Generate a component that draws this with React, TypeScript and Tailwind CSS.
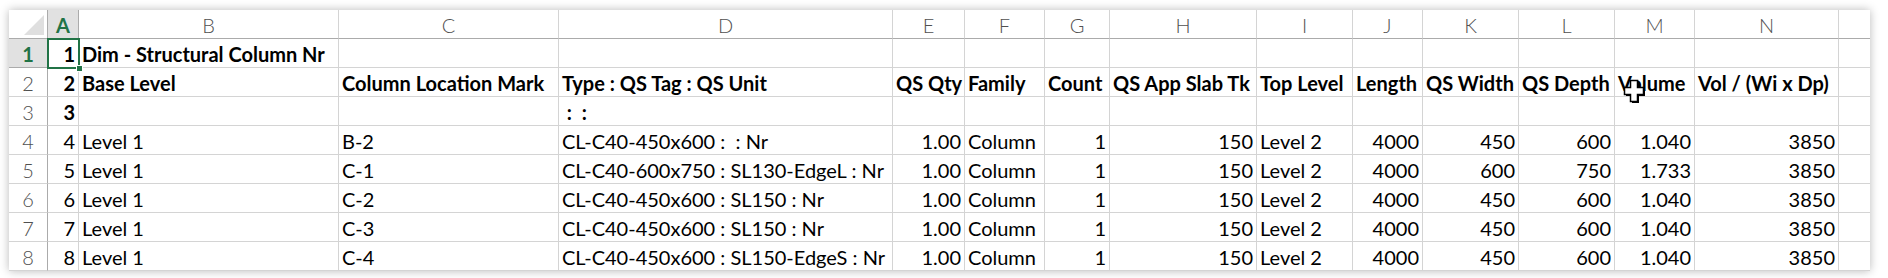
import React from "react";

type Cell = { t: string; r?: boolean };

const colLetters = ["A", "B", "C", "D", "E", "F", "G", "H", "I", "J", "K", "L", "M", "N", ""];

const L = (t: string): Cell => ({ t });
const R = (t: string): Cell => ({ t, r: true });

const headerRow: Cell[] = [
  R("2"),
  L("Base Level"),
  L("Column Location Mark"),
  L("Type : QS Tag : QS Unit"),
  L("QS Qty"),
  L("Family"),
  L("Count"),
  L("QS App Slab Tk"),
  L("Top Level"),
  L("Length"),
  L("QS Width"),
  L("QS Depth"),
  L("Volume"),
  L("Vol / (Wi x Dp)"),
  L(""),
];

const dataRows: [string, string, string, string, string, string, string][] = [
  ["4", "B-2", "CL-C40-450x600 :\u00a0\u00a0: Nr", "450", "600", "1.040", "3850"],
  ["5", "C-1", "CL-C40-600x750 : SL130-EdgeL : Nr", "600", "750", "1.733", "3850"],
  ["6", "C-2", "CL-C40-450x600 : SL150 : Nr", "450", "600", "1.040", "3850"],
  ["7", "C-3", "CL-C40-450x600 : SL150 : Nr", "450", "600", "1.040", "3850"],
  ["8", "C-4", "CL-C40-450x600 : SL150-EdgeS : Nr", "450", "600", "1.040", "3850"],
];

function rowCells(d: (typeof dataRows)[number]): Cell[] {
  return [
    R(d[0]),
    L("Level 1"),
    L(d[1]),
    L(d[2]),
    R("1.00"),
    L("Column"),
    R("1"),
    R("150"),
    L("Level 2"),
    R("4000"),
    R(d[3]),
    R(d[4]),
    R(d[5]),
    R(d[6]),
    L(""),
  ];
}

const empty = (n: number): Cell[] => Array.from({ length: n }, () => L(""));

const rows: { n: string; cells: Cell[]; bold: boolean }[] = [
  { n: "1", cells: [R("1"), L("Dim - Structural Column Nr"), ...empty(13)], bold: true },
  { n: "2", cells: headerRow, bold: true },
  { n: "3", cells: [R("3"), L(""), L(""), L("\u00a0:\u00a0\u00a0:"), ...empty(11)], bold: true },
  ...dataRows.map((d) => ({ n: d[0], cells: rowCells(d), bold: false })),
];

function Cursor() {
  return (
    <svg width="24" height="26" viewBox="0 0 24 26" className="absolute left-[1613px] top-[68px]">
      <path d="M10 4h7v7h6v7h-6v7h-7v-7h-6v-7h6z" fill="#000" />
      <path
        d="M8.5 2.5h7v7h6v7h-6v7h-7v-7h-6v-7h6z"
        fill="#fff"
        stroke="#000"
        strokeWidth="1.5"
      />
    </svg>
  );
}

export default function App() {
  return (
    <div className="w-[1888px] h-[278px] bg-white overflow-hidden pl-[9px] pt-[10px]">
      <div
        className="relative w-[1861px] bg-white shadow-[0_0_9px_rgba(0,0,0,0.28)] text-black"
        style={{ fontFamily: "Lato, 'Open Sans', sans-serif" }}
      >
        <div className="grid grid-cols-[39px_31px_260px_220px_334px_72px_80px_65px_147px_96px_70px_96px_96px_80px_144px_31px] text-[20px] leading-none">
          {/* header row */}
          <div className="relative h-[29px] border-r border-b border-[#ababab] bg-white overflow-hidden">
            <div className="absolute right-[3px] bottom-[3px] w-0 h-0 border-l-[20px] border-l-transparent border-b-[20px] border-b-[#dfdfdf]" />
          </div>
          {colLetters.map((c, i) => (
            <div
              key={c + i}
              className={
                i === 0
                  ? "h-[29px] pt-[2px] flex items-center justify-center border-r border-b border-r-[#ababab] border-b-[#217346] bg-[#e1e1e1] text-[#217346] font-bold"
                  : i === colLetters.length - 1
                  ? "h-[29px] border-b border-b-[#ababab]"
                  : "h-[29px] pt-[2px] flex items-center justify-center border-r border-b border-r-[#d4d4d4] border-b-[#ababab] text-[#505050] font-light"
              }
            >
              {c}
            </div>
          ))}
          {rows.map((row, ri) => (
            <React.Fragment key={ri}>
              <div
                className={
                  ri === 0
                    ? "h-[29px] pt-[2px] flex items-center justify-center border-r border-b border-r-[#217346] border-b-[#ababab] bg-[#e1e1e1] text-[#217346] font-bold"
                    : "h-[29px] pt-[2px] flex items-center justify-center border-r border-b border-r-[#ababab] border-b-[#d4d4d4] text-[#505050] font-light"
                }
              >
                {row.n}
              </div>
              {row.cells.map((c, ci) => (
                <div
                  key={ci}
                  className={
                    "h-[29px] pt-[2px] flex items-center whitespace-pre overflow-visible border-b border-[#d4d4d4] " +
                    (ci === row.cells.length - 1 ? "" : "border-r ") +
                    (c.r ? "justify-end pr-[3px] " : "justify-start pl-[3px] ") +
                    (row.bold ? "font-bold" : "font-normal")
                  }
                >
                  {c.t}
                </div>
              ))}
            </React.Fragment>
          ))}
        </div>
        {/* selection */}
        <div className="absolute left-[38px] top-[28px] w-[33px] h-[31px] border-2 border-[#217346] pointer-events-none" />
        <div className="absolute left-[67px] top-[55px] w-[7px] h-[7px] bg-[#217346] border border-white" />
        <Cursor />
      </div>
    </div>
  );
}
